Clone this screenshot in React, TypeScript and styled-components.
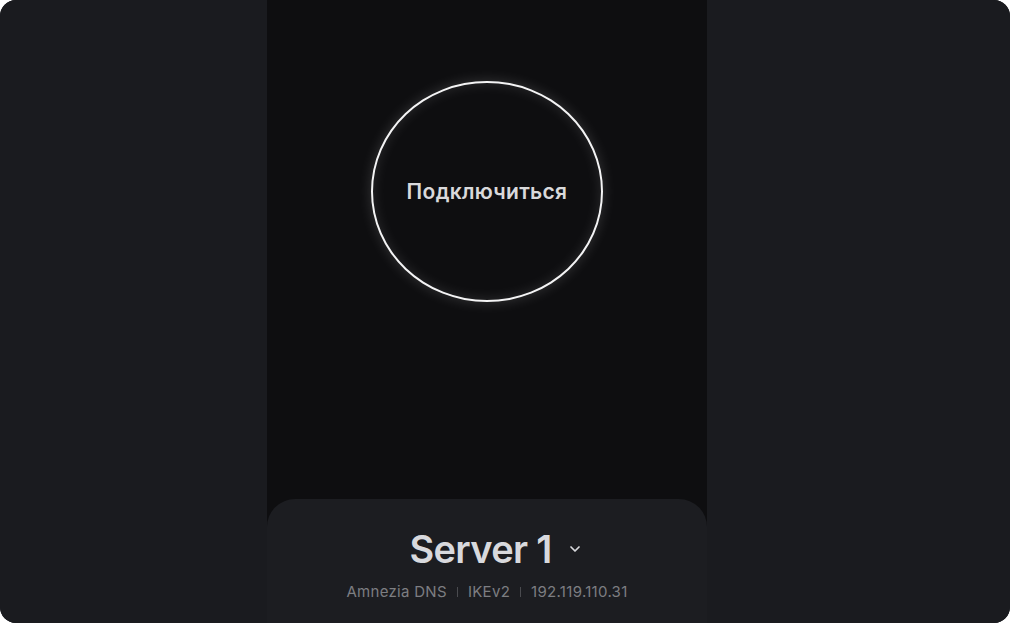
import React from "react";
import styled, { createGlobalStyle } from "styled-components";

const Global = createGlobalStyle`
  html, body { margin: 0; padding: 0; background: #ffffff; }
  body { font-family: Inter, "Noto Sans", sans-serif; }
  * { box-sizing: border-box; }
`;

const Frame = styled.div`
  width: 1010px;
  height: 623px;
  border-radius: 16px;
  background: #1a1b1f;
  overflow: hidden;
  display: grid;
  grid-template-columns: 267px 440px 1fr;
`;

const Side = styled.aside`
  background: #1a1b1f;
`;

const Column = styled.main`
  height: 100%;
  background: #0e0e10;
  display: flex;
  flex-direction: column;
`;

const Stage = styled.section`
  flex: 1;
  display: flex;
  justify-content: center;
  padding-top: 81px;
`;

const ConnectButton = styled.button`
  width: 232px;
  height: 221px;
  border-radius: 50%;
  border: 2px solid #f4f4f5;
  background: #0e0e10;
  box-shadow: 0 0 14px rgba(255, 255, 255, 0.16), inset 0 0 14px rgba(255, 255, 255, 0.12);
  color: #d9d9db;
  font-family: Inter, "Noto Sans", sans-serif;
  font-size: 21px;
  font-weight: 600;
  letter-spacing: 0.3px;
  cursor: pointer;
  padding: 0;
`;

const Card = styled.section`
  height: 124px;
  background: #1c1d21;
  border-radius: 28px 28px 0 0;
  display: flex;
  flex-direction: column;
  align-items: center;
  padding-top: 25px;
`;

const TitleRow = styled.div`
  display: flex;
  align-items: center;
  gap: 17px;
  margin-left: 16px;
`;

const Title = styled.h1`
  margin: 0;
  font-size: 38px;
  line-height: 50px;
  font-weight: 600;
  letter-spacing: -0.7px;
  color: #d8d9dd;
`;

const Meta = styled.div`
  margin-top: 8px;
  display: flex;
  align-items: center;
  gap: 10px;
  font-size: 15px;
  color: #7d7e82;
  letter-spacing: 0.3px;
`;

const Sep = styled.span`
  width: 1px;
  height: 10px;
  background: #4a4b4f;
`;

export default function App() {
  return (
    <>
      <Global />
      <Frame>
        <Side />
        <Column>
          <Stage>
            <ConnectButton>Подключиться</ConnectButton>
          </Stage>
          <Card>
            <TitleRow>
              <Title>Server 1</Title>
              <svg width="12" height="8" viewBox="0 0 12 8" fill="none">
                <path d="M2 2l4 4 4-4" stroke="#d8d9dd" strokeWidth="1.7" strokeLinecap="round" strokeLinejoin="round" />
              </svg>
            </TitleRow>
            <Meta>
              <span>Amnezia DNS</span>
              <Sep />
              <span>IKEv2</span>
              <Sep />
              <span>192.119.110.31</span>
            </Meta>
          </Card>
        </Column>
        <Side />
      </Frame>
    </>
  );
}
